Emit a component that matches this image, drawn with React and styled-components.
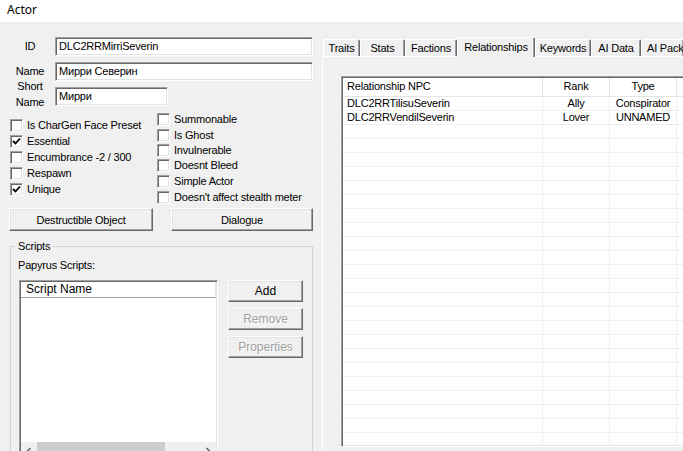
import React from 'react'
import styled, { createGlobalStyle, css } from 'styled-components'

const GlobalStyle = createGlobalStyle`
  html, body {
    margin: 0;
    padding: 0;
    background: #f0f0f0;
  }
  body {
    font-family: "Liberation Sans", Arial, sans-serif;
    font-size: 11px;
    letter-spacing: -0.2px;
    color: #000;
  }
  #root {
    width: 683px;
    height: 451px;
    overflow: hidden;
  }
`

const sunken = css`
  border: 1px solid;
  border-color: #a0a0a0 #fff #fff #a0a0a0;
  box-shadow: inset 1px 1px #696969, inset -1px -1px #e3e3e3;
`

const raised = css`
  border: 1px solid;
  border-color: #fff #696969 #696969 #fff;
  box-shadow: inset -1px -1px #a0a0a0, inset 1px 1px #e3e3e3;
`

const Window = styled.div`
  width: 683px;
  height: 451px;
  display: flex;
  flex-direction: column;
  overflow: hidden;
`

const TitleBar = styled.div`
  height: 22px;
  flex-shrink: 0;
  background: #fff;
  padding-left: 7px;
  font-family: "Noto Sans", "Liberation Sans", sans-serif;
  font-size: 12px;
  letter-spacing: 0;
  line-height: 20px;
  color: #000;
`

const Body = styled.div`
  flex: 1;
  display: flex;
  min-height: 0;
`

const LeftPane = styled.div`
  width: 322px;
  flex-shrink: 0;
  display: flex;
  flex-direction: column;
`

const Fields = styled.div`
  display: grid;
  grid-template-columns: 44px 1fr;
  column-gap: 3px;
  row-gap: 6px;
  align-items: center;
  padding: 15px 9px 0 8px;
`

const FieldLabel = styled.div`
  text-align: center;
  line-height: ${p => (p.$two ? '16px' : '13px')};
  margin: ${p => (p.$two ? '-9px 0 -4px' : '0')};
`

const TextBox = styled.div`
  ${sunken};
  box-sizing: border-box;
  height: 19px;
  width: ${p => (p.$w ? `${p.$w}px` : '100%')};
  background: #fff;
  padding: 0 3px;
  line-height: 17px;
  white-space: nowrap;
  overflow: hidden;
`

const Flags = styled.div`
  display: flex;
  padding-left: 10px;
  margin-top: 5px;
`

const FlagCol = styled.div`
  width: ${p => (p.$w ? `${p.$w}px` : 'auto')};
  padding-top: ${p => p.$pt || 0}px;
  display: flex;
  flex-direction: column;
`

const CheckRow = styled.div`
  display: flex;
  align-items: center;
  gap: 4px;
  height: ${p => p.$h || 16}px;
  white-space: nowrap;
`

const Box = styled.span`
  ${sunken};
  box-sizing: border-box;
  width: 13px;
  height: 13px;
  background: #fff;
  display: flex;
  align-items: center;
  justify-content: center;
  flex-shrink: 0;
`

const ButtonRow = styled.div`
  display: flex;
  gap: 18px;
  padding-left: 9px;
  margin-top: 3px;
`

const PushButton = styled.div`
  ${raised};
  box-sizing: border-box;
  width: ${p => p.$w}px;
  height: ${p => p.$h || 23}px;
  background: #f0f0f0;
  display: flex;
  align-items: center;
  justify-content: center;
  font-size: ${p => (p.$ui ? '12px' : '11px')};
  letter-spacing: ${p => (p.$ui ? '0' : '-0.2px')};
  color: ${p => (p.$disabled ? '#a0a0a0' : '#000')};
  text-shadow: ${p => (p.$disabled ? '1px 1px #fff' : 'none')};
`

const Group = styled.fieldset`
  margin: 9px 9px 0 10px;
  padding: 0 0 0 5px;
  border: 1px solid #d5d5d5;
  min-width: 0;
  flex: 1;
`

const Legend = styled.legend`
  padding: 0 2px;
  line-height: 13px;
`

const GroupInner = styled.div`
  padding-left: 2px;
`

const Caption = styled.div`
  line-height: 13px;
  margin-top: 6px;
`

const ScriptsRow = styled.div`
  display: flex;
  align-items: flex-start;
  gap: 10px;
  margin-top: 8px;
  margin-left: 1px;
`

const ListBox = styled.div`
  ${sunken};
  box-sizing: border-box;
  width: 199px;
  height: 181px;
  background: #fff;
  display: flex;
  flex-direction: column;
`

const ListHeader = styled.div`
  height: 16px;
  box-sizing: border-box;
  margin: 1px 1px 0 1px;
  padding-left: 5px;
  border-bottom: 1px solid #a0a0a0;
  border-right: 1px solid #e5e5e5;
  font-size: 12px;
  letter-spacing: 0;
  line-height: 15px;
`

const ListBody = styled.div`
  flex: 1;
`

const HScroll = styled.div`
  height: 17px;
  margin: 0 1px 1px 1px;
  background: #f0f0f0;
  display: flex;
  align-items: stretch;
`

const ScrollArrow = styled.div`
  width: 16px;
  display: flex;
  align-items: center;
  justify-content: center;
  color: #606060;
`

const Thumb = styled.div`
  width: 128px;
  background: #cdcdcd;
`

const Track = styled.div`
  flex: 1;
`

const SideButtons = styled.div`
  display: flex;
  flex-direction: column;
  gap: 6px;
`

const TabArea = styled.div`
  flex: 1;
  min-width: 0;
  overflow: hidden;
  padding-top: 15px;
  display: flex;
  flex-direction: column;
`

const TabStrip = styled.div`
  display: flex;
  align-items: flex-end;
  height: 19px;
  padding-left: 1px;
  flex-shrink: 0;
`

const Tab = styled.div`
  box-sizing: border-box;
  width: ${p => p.$w}px;
  flex-shrink: 0;
  height: ${p => (p.$active ? 20 : 17)}px;
  margin-bottom: ${p => (p.$active ? '-1px' : '0')};
  position: relative;
  z-index: ${p => (p.$active ? 1 : 0)};
  background: #f0f0f0;
  border-top: 1px solid #fff;
  border-left: 1px solid #fff;
  border-right: 1px solid #696969;
  box-shadow: inset -1px 0 #a0a0a0;
  border-radius: 2px 2px 0 0;
  display: flex;
  align-items: center;
  justify-content: ${p => (p.$clip ? 'flex-start' : 'center')};
  padding-left: ${p => (p.$clip ? '5px' : '0')};
  white-space: nowrap;
  overflow: hidden;
  padding-bottom: ${p => (p.$active ? '2px' : '0')};
`

const Panel = styled.div`
  flex: 1;
  border-top: 1px solid #fff;
  border-left: 1px solid #fff;
  padding: 19px 0 0 18px;
`

const ListView = styled.div`
  ${sunken};
  box-sizing: border-box;
  width: 420px;
  height: 371px;
  background: #fff;
  overflow: hidden;
`

const cols = '200px 67px 67px 100px'

const LvHeader = styled.div`
  display: grid;
  grid-template-columns: ${cols};
  height: 19px;
  box-sizing: border-box;
  margin: 1px 0 0 1px;
  border-bottom: 1px solid #e5e5e5;
`

const LvHeadCell = styled.div`
  border-right: 1px solid #e5e5e5;
  line-height: 17px;
  padding-left: ${p => (p.$center ? 0 : 4)}px;
  text-align: ${p => (p.$center ? 'center' : 'left')};
  white-space: nowrap;
`

const LvRow = styled.div`
  display: grid;
  grid-template-columns: ${cols};
  height: 14px;
  box-sizing: border-box;
  margin-left: 1px;
  border-bottom: 1px solid #f0f0f0;
`

const LvCell = styled.div`
  border-right: 1px solid #f0f0f0;
  line-height: 13px;
  padding-left: ${p => (p.$center ? 0 : 4)}px;
  text-align: ${p => (p.$center ? 'center' : 'left')};
  white-space: nowrap;
  overflow: hidden;
`

const Check = ({ checked, label, h }) => (
  <CheckRow $h={h}>
    <Box>
      {checked && (
        <svg width="9" height="9" viewBox="0 0 9 9">
          <path d="M1 4 L3.5 6.5 L8 1.5" fill="none" stroke="#000" strokeWidth="1.8" />
        </svg>
      )}
    </Box>
    <span>{label}</span>
  </CheckRow>
)

const Chevron = ({ dir }) => (
  <svg width="6" height="8" viewBox="0 0 6 8">
    <path
      d={dir === 'left' ? 'M4.5 1 L1.5 4 L4.5 7' : 'M1.5 1 L4.5 4 L1.5 7'}
      fill="none"
      stroke="currentColor"
      strokeWidth="1.5"
    />
  </svg>
)

const leftFlags = [
  { label: 'Is CharGen Face Preset' },
  { label: 'Essential', checked: true },
  { label: 'Encumbrance -2 / 300' },
  { label: 'Respawn' },
  { label: 'Unique', checked: true },
]

const rightFlags = [
  { label: 'Summonable', h: 16 },
  { label: 'Is Ghost', h: 16 },
  { label: 'Invulnerable', h: 14 },
  { label: 'Doesnt Bleed', h: 16 },
  { label: 'Simple Actor', h: 16 },
  { label: "Doesn't affect stealth meter", h: 16 },
]

const tabs = [
  { label: 'Traits', w: 37 },
  { label: 'Stats', w: 45 },
  { label: 'Factions', w: 52 },
  { label: 'Relationships', w: 78, active: true },
  { label: 'Keywords', w: 56 },
  { label: 'AI Data', w: 50 },
  { label: 'AI Pack', w: 43, clip: true },
]

const relationships = [
  { npc: 'DLC2RRTilisuSeverin', rank: 'Ally', type: 'Conspirator' },
  { npc: 'DLC2RRVendilSeverin', rank: 'Lover', type: 'UNNAMED' },
]

export default function App() {
  const emptyRows = Array.from({ length: 24 }, (_, i) => i)

  return (
    <Window>
      <GlobalStyle />
      <TitleBar>Actor</TitleBar>
      <Body>
        <LeftPane>
          <Fields>
            <FieldLabel>ID</FieldLabel>
            <TextBox>DLC2RRMirriSeverin</TextBox>
            <FieldLabel>Name</FieldLabel>
            <TextBox>Мирри Северин</TextBox>
            <FieldLabel $two>Short<br />Name</FieldLabel>
            <TextBox $w={113}>Мирри</TextBox>
          </Fields>

          <Flags>
            <FlagCol $w={147} $pt={6}>
              {leftFlags.map(f => (
                <Check key={f.label} label={f.label} checked={f.checked} />
              ))}
            </FlagCol>
            <FlagCol>
              {rightFlags.map(f => (
                <Check key={f.label} label={f.label} h={f.h} />
              ))}
            </FlagCol>
          </Flags>

          <ButtonRow>
            <PushButton $w={144}>Destructible Object</PushButton>
            <PushButton $w={142}>Dialogue</PushButton>
          </ButtonRow>

          <Group>
            <Legend>Scripts</Legend>
            <GroupInner>
              <Caption>Papyrus Scripts:</Caption>
              <ScriptsRow>
                <ListBox>
                  <ListHeader>Script Name</ListHeader>
                  <ListBody />
                  <HScroll>
                    <ScrollArrow><Chevron dir="left" /></ScrollArrow>
                    <Thumb />
                    <Track />
                    <ScrollArrow><Chevron dir="right" /></ScrollArrow>
                  </HScroll>
                </ListBox>
                <SideButtons>
                  <PushButton $w={75} $h={22} $ui>Add</PushButton>
                  <PushButton $w={75} $h={22} $ui $disabled>Remove</PushButton>
                  <PushButton $w={75} $h={22} $ui $disabled>Properties</PushButton>
                </SideButtons>
              </ScriptsRow>
            </GroupInner>
          </Group>
        </LeftPane>

        <TabArea>
          <TabStrip>
            {tabs.map(t => (
              <Tab key={t.label} $w={t.w} $active={t.active} $clip={t.clip}>{t.label}</Tab>
            ))}
          </TabStrip>
          <Panel>
            <ListView>
              <LvHeader>
                <LvHeadCell>Relationship NPC</LvHeadCell>
                <LvHeadCell $center>Rank</LvHeadCell>
                <LvHeadCell $center>Type</LvHeadCell>
                <LvHeadCell />
              </LvHeader>
              {relationships.map(r => (
                <LvRow key={r.npc}>
                  <LvCell>{r.npc}</LvCell>
                  <LvCell $center>{r.rank}</LvCell>
                  <LvCell $center>{r.type}</LvCell>
                  <LvCell />
                </LvRow>
              ))}
              {emptyRows.map(i => (
                <LvRow key={i}>
                  <LvCell />
                  <LvCell />
                  <LvCell />
                  <LvCell />
                </LvRow>
              ))}
            </ListView>
          </Panel>
        </TabArea>
      </Body>
    </Window>
  )
}
